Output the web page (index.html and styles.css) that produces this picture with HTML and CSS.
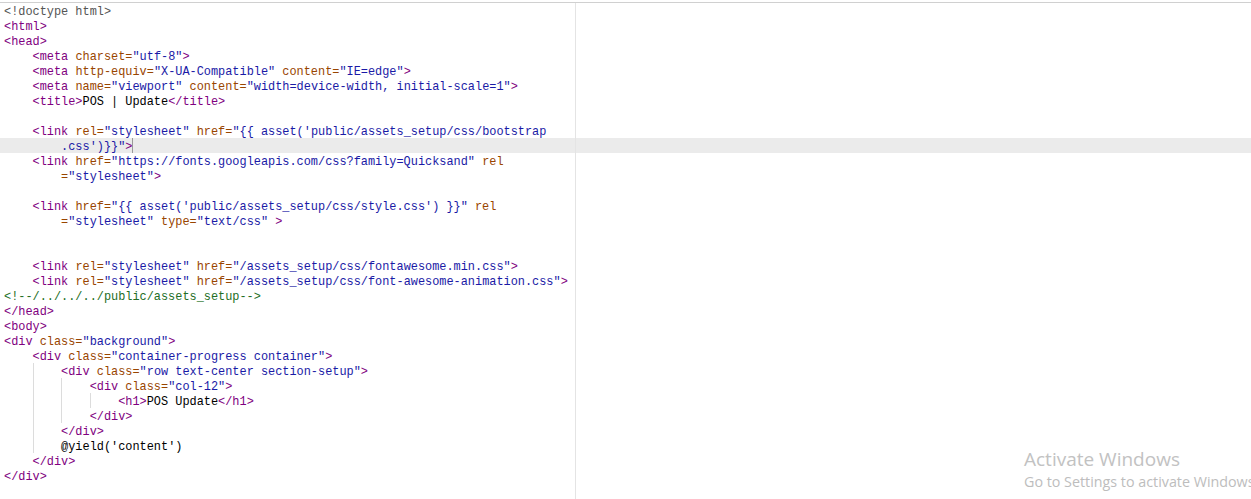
FILE: index.html
```html
<!DOCTYPE html>
<html lang="en">
<head>
<meta charset="UTF-8">
<title>POS Update - editor</title>
<link rel="stylesheet" href="styles.css">
</head>
<body>
<div class="editor">
    <div class="code">
<div class="ln"><span class="dt">&lt;!doctype html&gt;</span></div>
<div class="ln"><span class="tg">&lt;html&gt;</span></div>
<div class="ln"><span class="tg">&lt;head&gt;</span></div>
<div class="ln">    <span class="tg">&lt;meta</span> <span class="at">charset=</span><span class="st">"utf-8"</span><span class="tg">&gt;</span></div>
<div class="ln">    <span class="tg">&lt;meta</span> <span class="at">http-equiv=</span><span class="st">"X-UA-Compatible"</span> <span class="at">content=</span><span class="st">"IE=edge"</span><span class="tg">&gt;</span></div>
<div class="ln">    <span class="tg">&lt;meta</span> <span class="at">name=</span><span class="st">"viewport"</span> <span class="at">content=</span><span class="st">"width=device-width, initial-scale=1"</span><span class="tg">&gt;</span></div>
<div class="ln">    <span class="tg">&lt;title&gt;</span>POS | Update<span class="tg">&lt;/title&gt;</span></div>
<div class="ln"> </div>
<div class="ln">    <span class="tg">&lt;link</span> <span class="at">rel=</span><span class="st">"stylesheet"</span> <span class="at">href=</span><span class="st">"{{ asset('public/assets_setup/css/bootstrap</span></div>
<div class="ln current">        <span class="st">.css')}}"</span><span class="tg">&gt;</span><span class="caret"></span></div>
<div class="ln">    <span class="tg">&lt;link</span> <span class="at">href=</span><span class="st">"https://fonts.googleapis.com/css?family=Quicksand"</span> <span class="at">rel</span></div>
<div class="ln">        <span class="at">=</span><span class="st">"stylesheet"</span><span class="tg">&gt;</span></div>
<div class="ln"> </div>
<div class="ln">    <span class="tg">&lt;link</span> <span class="at">href=</span><span class="st">"{{ asset('public/assets_setup/css/style.css') }}"</span> <span class="at">rel</span></div>
<div class="ln">        <span class="at">=</span><span class="st">"stylesheet"</span> <span class="at">type=</span><span class="st">"text/css"</span><span class="tg"> &gt;</span></div>
<div class="ln"> </div>
<div class="ln"> </div>
<div class="ln">    <span class="tg">&lt;link</span> <span class="at">rel=</span><span class="st">"stylesheet"</span> <span class="at">href=</span><span class="st">"/assets_setup/css/fontawesome.min.css"</span><span class="tg">&gt;</span></div>
<div class="ln">    <span class="tg">&lt;link</span> <span class="at">rel=</span><span class="st">"stylesheet"</span> <span class="at">href=</span><span class="st">"/assets_setup/css/font-awesome-animation.css"</span><span class="tg">&gt;</span></div>
<div class="ln"><span class="cm">&lt;!--/../../../public/assets_setup--&gt;</span></div>
<div class="ln"><span class="tg">&lt;/head&gt;</span></div>
<div class="ln"><span class="tg">&lt;body&gt;</span></div>
<div class="ln"><span class="tg">&lt;div</span> <span class="at">class=</span><span class="st">"background"</span><span class="tg">&gt;</span></div>
<div class="ln">    <span class="tg">&lt;div</span> <span class="at">class=</span><span class="st">"container-progress container"</span><span class="tg">&gt;</span></div>
<div class="ln">    <span class="gd">    </span><span class="tg">&lt;div</span> <span class="at">class=</span><span class="st">"row text-center section-setup"</span><span class="tg">&gt;</span></div>
<div class="ln">    <span class="gd">    </span><span class="gd">    </span><span class="tg">&lt;div</span> <span class="at">class=</span><span class="st">"col-12"</span><span class="tg">&gt;</span></div>
<div class="ln">    <span class="gd">    </span><span class="gd">    </span><span class="gd">    </span><span class="tg">&lt;h1&gt;</span>POS Update<span class="tg">&lt;/h1&gt;</span></div>
<div class="ln">    <span class="gd">    </span><span class="gd">    </span><span class="tg">&lt;/div&gt;</span></div>
<div class="ln">    <span class="gd">    </span><span class="tg">&lt;/div&gt;</span></div>
<div class="ln">    <span class="gd">    </span>@yield('content')</div>
<div class="ln">    <span class="tg">&lt;/div&gt;</span></div>
<div class="ln"><span class="tg">&lt;/div&gt;</span></div>
    </div>
</div>

<div class="watermark">
    <div class="wm-title">Activate Windows</div>
    <div class="wm-sub">Go to Settings to activate Windows.</div>
</div>
</body>
</html>
```

FILE: styles.css
```css
html, body {
    margin: 0;
    padding: 0;
    background-color: #fff;
    overflow: hidden;
}
body {
    width: 1251px;
    height: 499px;
    position: relative;
}
.editor {
    margin-top: 2px;
    border-top: 1px solid #d0d0d0;
    height: 496px;
}
.code {
    position: relative;
    height: 100%;
    font-family: 'Liberation Mono', 'DejaVu Sans Mono', monospace;
    font-size: 11.9px;
    color: #000;
}
/* vertical ruler */
.code::after {
    content: '';
    position: absolute;
    left: 575px;
    top: 0;
    bottom: 0;
    width: 1px;
    background-color: #e4e4e4;
}
.ln {
    height: 13px;
    line-height: 15px;
    padding-top: 2px;
    padding-left: 4px;
    white-space: pre;
}
.ln.current {
    background-color: #ebebeb;
}
.caret {
    display: inline-block;
    width: 0;
    height: 15px;
    margin-top: -2px;
    vertical-align: top;
    border-left: 1px solid #9a9a9a;
}
.gd {
    display: inline-block;
    height: 15px;
    margin-top: -2px;
    vertical-align: top;
    box-shadow: inset 1px 0 0 #dcdcdc;
}
.dt {
    color: #555;
}
.tg {
    color: #800080;
}
.at {
    color: #994500;
}
.st {
    color: #1a1aa6;
}
.cm {
    color: #236e25;
}

.watermark {
    position: absolute;
    left: 1024px;
    top: 446px;
    white-space: nowrap;
    font-family: 'Open Sans', 'Noto Sans', sans-serif;
    color: #c2c2c2;
}
.wm-title {
    font-size: 19px;
    line-height: 26px;
}
.wm-sub {
    font-size: 14.3px;
    line-height: 19px;
    color: #bdbdbd;
}
```
